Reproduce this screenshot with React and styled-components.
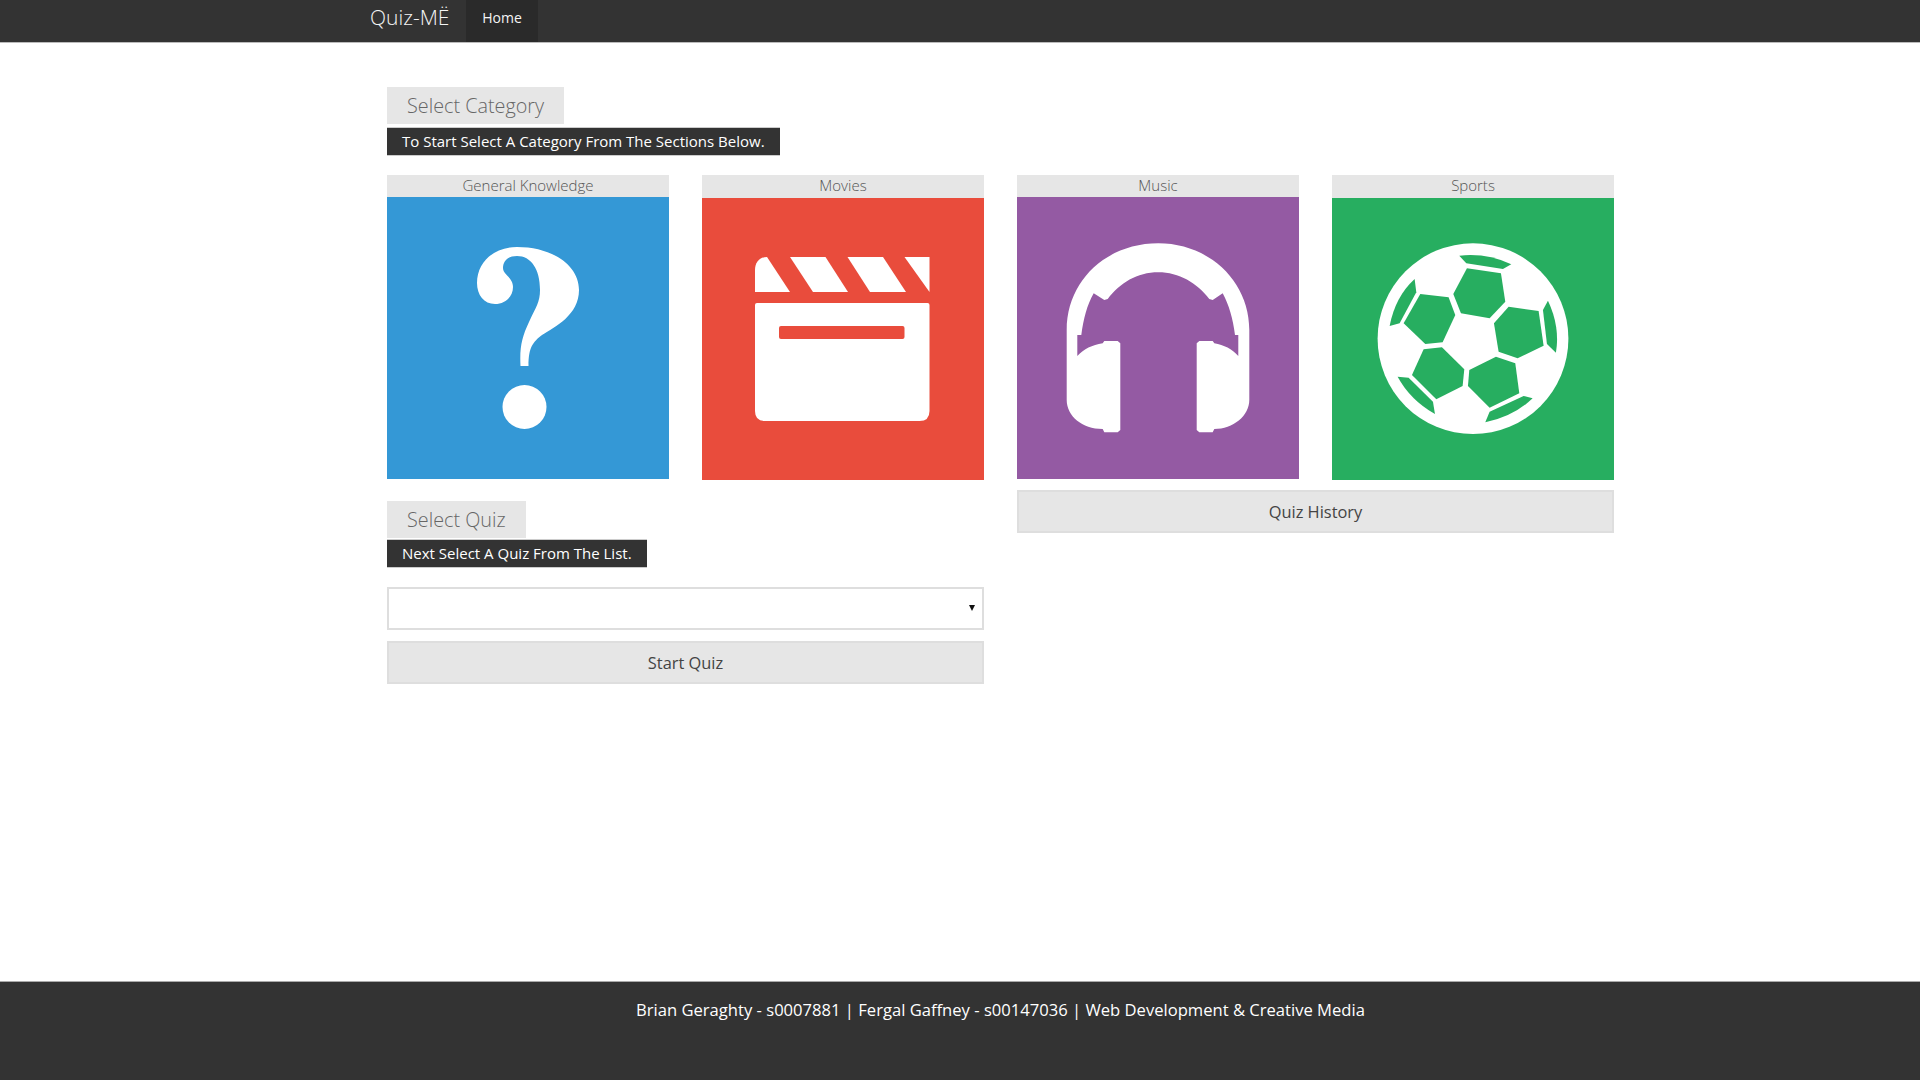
import React from 'react';
import styled, { createGlobalStyle } from 'styled-components';

const GlobalStyle = createGlobalStyle`
    html, body {
        margin: 0;
        padding: 0;
        background: #fff;
        font-family: "Open Sans", "Liberation Sans", sans-serif;
    }
    * {
        box-sizing: border-box;
    }
`;

const Page = styled.div`
    display: flex;
    flex-direction: column;
    height: 1080px;
    overflow: hidden;
`;

const NavBar = styled.nav`
    display: flex;
    align-items: stretch;
    height: 43px;
    padding-left: 370px;
    background: #333;
    border-bottom: 1px solid #bbb;
`;

const Brand = styled.a`
    width: 96px;
    font-size: 21px;
    font-weight: 300;
    line-height: 34px;
    color: #f4f4f4;
`;

const NavLink = styled.a`
    width: 72px;
    text-align: center;
    font-size: 14px;
    line-height: 35px;
    color: #f4f4f4;
    background: #2a2a2a;
`;

const Main = styled.main`
    flex: 1;
    display: grid;
    grid-template-columns: repeat(4, 282px);
    column-gap: 33px;
    align-content: start;
    padding: 44px 0 0 387px;
`;

const Intro = styled.div`
    grid-column: 1 / -1;
    margin-bottom: 19px;
`;

const SectionTitle = styled.h2`
    width: fit-content;
    height: 37px;
    margin: 0 0 ${props => props.$gap}px;
    padding: 0 20px;
    font-size: 19.8px;
    font-weight: 300;
    line-height: 37px;
    color: #666;
    background: #e6e6e6;
`;

const Hint = styled.p`
    width: fit-content;
    height: 29px;
    margin: 0;
    padding: 0 15px;
    font-size: 15px;
    line-height: 26px;
    color: #fff;
    background: #333;
    border: 1px solid #ccc;
    border-width: 1px 0 1px 0;
`;

const Card = styled.a`
    display: block;
`;

const CardTitle = styled.div`
    height: ${props => props.$tall ? 23 : 22}px;
    text-align: center;
    font-size: 15px;
    font-weight: 300;
    line-height: 20px;
    color: #555;
    background: #e6e6e6;
`;

const CardArt = styled.svg`
    display: block;
    width: 282px;
    height: 282px;
    background: ${props => props.$colour};
`;

const QuizColumn = styled.section`
    grid-column: 1 / span 2;
    padding-top: 21px;
`;

const HistoryColumn = styled.section`
    grid-column: 3 / span 2;
    padding-top: 10px;
`;

const SelectWrap = styled.div`
    position: relative;
    margin: 19px 0 11px;

    &::after {
        content: "";
        position: absolute;
        top: 18px;
        right: 9px;
        border: 3.5px solid transparent;
        border-top: 6px solid #111;
        border-bottom: 0;
    }
`;

const QuizSelect = styled.select`
    display: block;
    width: 100%;
    height: 43px;
    appearance: none;
    background: #fff;
    border: 2px solid #dedede;
    border-radius: 0;
`;

const WideButton = styled.button`
    display: block;
    width: 100%;
    height: 43px;
    padding: 0 0 1px;
    font-family: inherit;
    font-size: 16.4px;
    color: #444;
    background: #e6e6e6;
    border: 2px solid #dedede;
    border-radius: 0;
`;

const Footer = styled.footer`
    height: 99px;
    padding: 16px 0 0 387px;
    background: #333;
    border-top: 1px solid #aaa;
`;

const FooterText = styled.p`
    width: 1227px;
    margin: 0;
    text-align: center;
    font-size: 16.6px;
    line-height: 24px;
    color: #fff;
`;

const QuestionIcon = () => (
    <CardArt $colour="#3498d6" viewBox="0 0 282 282">
        <path fill="#fff" d="M130 50C165 50 192 68 192 93C192 118 168 130 155 138C146 145 141.500 150 141.500 169L133.500 169C132.500 150 135 140 142 125C149 110 153 105 153 93C153 72 144 59 130 59C121 59 116 64 116 71C116 78 126 80 126 90C126 100 118 107 108 107C97 107 90 98 90 86C90 65 107 50 130 50Z" />
        <ellipse fill="#fff" cx="137.500" cy="210" rx="22" ry="22" />
    </CardArt>
);

const ClapperIcon = () => (
    <CardArt $colour="#e94c3c" viewBox="0 0 282 282">
        <g fill="#fff">
            <path d="M53 94V72C53 64 58 59 65 59L88 94Z" />
            <path d="M88 59H123.500L146 94H111Z" />
            <path d="M145.500 59H181L204 94H168Z" />
            <path d="M202.500 59H227.500V94Z" />
            <path d="M55 105H225.500Q227.500 105 227.500 107V213Q227.500 223 217.500 223H63Q53 223 53 213V107Q53 105 55 105Z" />
        </g>
        <rect fill="#e94c3c" x="77" y="128" width="125.500" height="13" rx="2" />
    </CardArt>
);

const HeadphonesIcon = () => (
    <CardArt $colour="#945aa3" viewBox="0 0 282 282">
        <path fill="#fff" d="M141.300 46.300C192 46.300 232.300 84 232.300 133V203C232.300 219 216 232 197.300 232L195.700 235.300H182.300L179.700 233V146.300L182.300 144H195.700L197.300 146.300C207 148 215 152 221.300 159V138H218C216 122 212 108 205.700 96.300L195.700 103L192.300 102C180 86 162 75.300 141.300 75.300C120 75.300 103 86 90.700 102L87.300 103L76.700 96.300C70 108 66.500 122 64.300 138H60.300V159C67 152 75 148 85.700 146.300L87.300 144H100.700L103.300 146.300V233L100.700 235.300H87.300L85.700 232C65 232 49.700 219 49.700 203V133C49.700 84 89 46.300 141.300 46.300Z" />
    </CardArt>
);

const BallIcon = () => (
    <CardArt $colour="#27ae60" viewBox="0 0 282 282">
        <circle fill="#fff" cx="141" cy="140.700" r="95.400" />
        {/* panels traced at 3x, hence the scale */}
        <g fill="#27ae60" transform="translate(28.300 32) scale(0.3333)">
            <path d="M297 77Q380 68 453 103L428 117L318 100Z" />
            <path d="M320 115L422 130L435 215L388 265L302 250L279 192Z" />
            <path d="M445 230L535 243L550 347L472 385L415 365L401 280Z" />
            <path d="M180 192L265 202L285 255L247 337L195 342L130 280Z" />
            <path d="M190 358L245 352L312 418L307 468L228 508L155 435Z" />
            <path d="M407 380L465 400L477 490L388 533L323 468L327 420Z" />
            <path d="M163 147L168 187L118 280L88 288Q105 200 163 147Z" />
            <path d="M563 212Q600 290 587 368L560 342L548 240Z" />
            <path d="M112 440L145 443L218 515L224 552Q150 510 112 440Z" />
            <path d="M517 505Q460 560 375 577L388 545L490 498Z" />
        </g>
    </CardArt>
);

const App = () => {
    return (
        <Page>
            <GlobalStyle />
            <NavBar>
                <Brand>Quiz-MË</Brand>
                <NavLink>Home</NavLink>
            </NavBar>
            <Main>
                <Intro>
                    <SectionTitle $gap={3}>Select Category</SectionTitle>
                    <Hint>To Start Select A Category From The Sections Below.</Hint>
                </Intro>
                <Card>
                    <CardTitle>General Knowledge</CardTitle>
                    <QuestionIcon />
                </Card>
                <Card>
                    <CardTitle $tall>Movies</CardTitle>
                    <ClapperIcon />
                </Card>
                <Card>
                    <CardTitle>Music</CardTitle>
                    <HeadphonesIcon />
                </Card>
                <Card>
                    <CardTitle $tall>Sports</CardTitle>
                    <BallIcon />
                </Card>
                <QuizColumn>
                    <SectionTitle $gap={1}>Select Quiz</SectionTitle>
                    <Hint>Next Select A Quiz From The List.</Hint>
                    <SelectWrap>
                        <QuizSelect />
                    </SelectWrap>
                    <WideButton>Start Quiz</WideButton>
                </QuizColumn>
                <HistoryColumn>
                    <WideButton>Quiz History</WideButton>
                </HistoryColumn>
            </Main>
            <Footer>
                <FooterText>Brian Geraghty - s0007881 | Fergal Gaffney - s00147036 | Web Development &amp; Creative Media</FooterText>
            </Footer>
        </Page>
    );
};

export default App;
